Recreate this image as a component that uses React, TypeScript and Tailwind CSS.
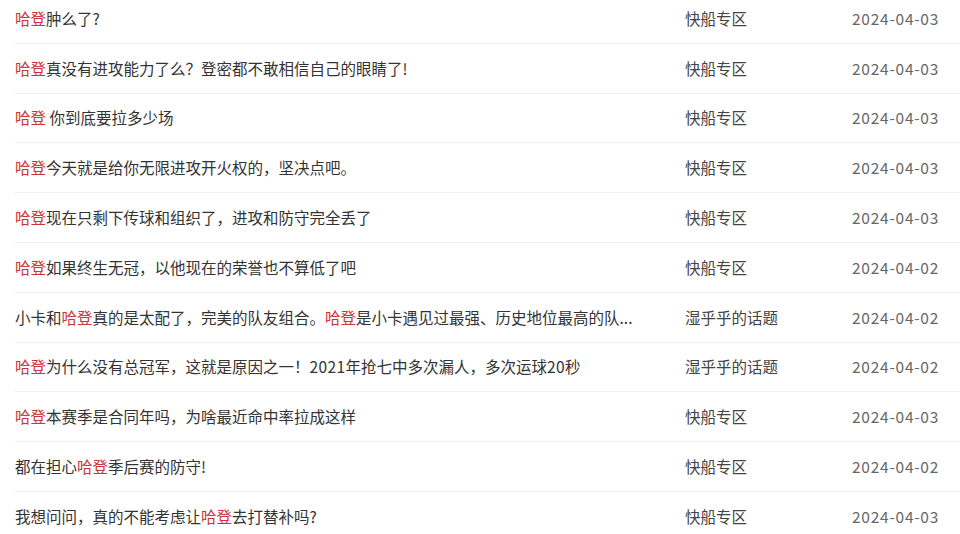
const rows: { title: React.ReactNode; zone: string; date: string }[] = [
  { title: <><Hl />肿么了?</>, zone: "快船专区", date: "2024-04-03" },
  { title: <><Hl />真没有进攻能力了么？登密都不敢相信自己的眼睛了!</>, zone: "快船专区", date: "2024-04-03" },
  { title: <><Hl /> 你到底要拉多少场</>, zone: "快船专区", date: "2024-04-03" },
  { title: <><Hl />今天就是给你无限进攻开火权的，坚决点吧。</>, zone: "快船专区", date: "2024-04-03" },
  { title: <><Hl />现在只剩下传球和组织了，进攻和防守完全丢了</>, zone: "快船专区", date: "2024-04-03" },
  { title: <><Hl />如果终生无冠，以他现在的荣誉也不算低了吧</>, zone: "快船专区", date: "2024-04-02" },
  {
    title: <>小卡和<Hl />真的是太配了，完美的队友组合。<Hl />是小卡遇见过最强、历史地位最高的队...</>,
    zone: "湿乎乎的话题",
    date: "2024-04-02",
  },
  {
    title: <><Hl />为什么没有总冠军，这就是原因之一！<span className="tracking-[0.4px]">2021</span>年抢七中多次漏人，多次运球<span className="tracking-[0.4px]">20</span>秒</>,
    zone: "湿乎乎的话题",
    date: "2024-04-02",
  },
  { title: <><Hl />本赛季是合同年吗，为啥最近命中率拉成这样</>, zone: "快船专区", date: "2024-04-03" },
  { title: <>都在担心<Hl />季后赛的防守!</>, zone: "快船专区", date: "2024-04-02" },
  { title: <>我想问问，真的不能考虑让<Hl />去打替补吗?</>, zone: "快船专区", date: "2024-04-03" },
];

function Hl() {
  return <span className="text-[#cc3535]">哈登</span>;
}

export default function App() {
  return (
    <div className="h-[534px] w-[960px] overflow-hidden bg-white pl-[15px] font-['Noto_Sans_CJK_SC',sans-serif] text-[15.5px] text-[#333]">
      <ul className="-mt-[6px]">
        {rows.map((r, i) => (
          <li key={i} className="flex h-[49.8px] items-center border-b border-[#f0f0f0]">
            <div className="w-[640px] truncate">{r.title}</div>
            <div className="ml-[30px] w-[167px] text-[#444]">{r.zone}</div>
            <div className="tracking-[0.75px] text-[#666]">{r.date}</div>
          </li>
        ))}
      </ul>
    </div>
  );
}
